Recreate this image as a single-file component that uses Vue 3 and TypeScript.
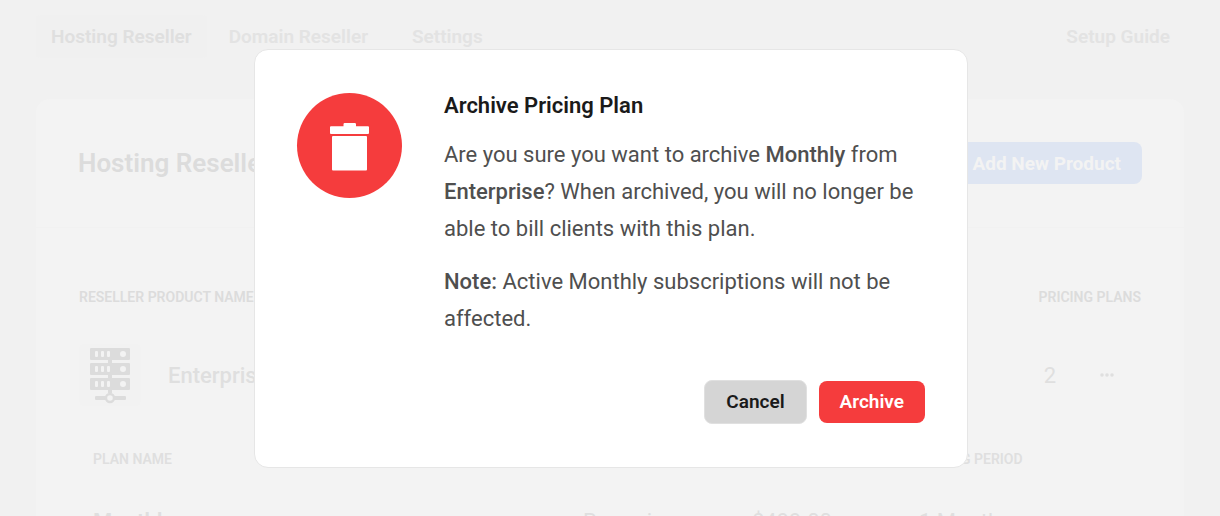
<script setup lang="ts">
import { ref } from 'vue'

interface Plan {
  name: string
  type: string
  price: string
  period: string
}

const tabs = ['Hosting Reseller', 'Domain Reseller', 'Settings']
const activeTab = ref(0)
const open = ref(true)
const plans = ref<Plan[]>([
  { name: 'Monthly', type: 'Recurring', price: '$499.00', period: '1 Month' },
])

function archive(): void {
  plans.value = []
  open.value = false
}
</script>

<template>
  <div class="page">
    <div class="content" :inert="open">
      <nav class="tabs" aria-label="Reseller">
        <button
          v-for="(tab, i) in tabs"
          :key="tab"
          type="button"
          class="tab"
          :class="{ active: i === activeTab }"
          @click="activeTab = i"
        >
          {{ tab }}
        </button>
        <a class="tab guide" href="#guide">Setup Guide</a>
      </nav>

      <main class="card">
        <header class="card-head">
          <h1>Hosting Reseller</h1>
          <button type="button" class="add">Add New Product</button>
        </header>

        <table class="products">
          <thead>
            <tr>
              <th scope="col">RESELLER PRODUCT NAME</th>
              <th scope="col" class="right">PRICING PLANS</th>
            </tr>
          </thead>
          <tbody>
            <tr>
              <td>
                <div class="product">
                  <span class="thumb">
                    <svg width="42" height="58" viewBox="0 0 42 58" aria-hidden="true">
                      <g fill="#dcdcdc">
                        <rect x="19" y="11" width="4" height="36" />
                        <rect x="1" y="2" width="40" height="12" rx="1" />
                        <rect x="1" y="17" width="40" height="12" rx="1" />
                        <rect x="1" y="32" width="40" height="12" rx="1" />
                        <rect x="6" y="50" width="31" height="4" rx="1" />
                      </g>
                      <g fill="#f3f3f3">
                        <template v-for="y in [5, 20, 35]" :key="y">
                          <rect x="6" :y="y" width="3" height="6" rx="1" />
                          <rect x="12" :y="y" width="3" height="6" rx="1" />
                          <rect x="18" :y="y" width="3" height="6" rx="1" />
                          <circle cx="34" :cy="y + 3" r="3" />
                        </template>
                      </g>
                      <circle cx="21" cy="52" r="4" fill="#f3f3f3" stroke="#dcdcdc" stroke-width="2.4" />
                    </svg>
                  </span>
                  <span class="product-name">Enterprise</span>
                </div>
              </td>
              <td>
                <div class="count">
                  <span>2</span>
                  <button type="button" class="more" aria-label="More actions">
                    <svg width="14" height="4" viewBox="0 0 14 4" fill="#dfdfdf" aria-hidden="true">
                      <circle cx="2" cy="2" r="1.8" />
                      <circle cx="7" cy="2" r="1.8" />
                      <circle cx="12" cy="2" r="1.8" />
                    </svg>
                  </button>
                </div>
              </td>
            </tr>
          </tbody>
        </table>

        <table class="plans">
          <colgroup>
            <col class="c-name" />
            <col class="c-type" />
            <col class="c-price" />
            <col />
          </colgroup>
          <thead>
            <tr>
              <th scope="col">PLAN NAME</th>
              <th scope="col">TYPE</th>
              <th scope="col">PRICE</th>
              <th scope="col">BILLING PERIOD</th>
            </tr>
          </thead>
          <tbody>
            <tr v-for="plan in plans" :key="plan.name">
              <td class="strong">{{ plan.name }}</td>
              <td>{{ plan.type }}</td>
              <td>{{ plan.price }}</td>
              <td>{{ plan.period }}</td>
            </tr>
          </tbody>
        </table>
      </main>
    </div>

    <div v-if="open" class="overlay">
      <section class="dialog" role="alertdialog" aria-modal="true" aria-labelledby="dlg-title" aria-describedby="dlg-text">
        <div class="dialog-body">
          <div class="badge">
            <svg width="39" height="48" viewBox="0 0 39 48" fill="#fff" aria-hidden="true">
              <path d="M13.5 3.2V1.2Q13.5 0 14.7 0H24.8Q26 0 26 1.2V3.2H38Q39 3.2 39 4.2V10Q39 11 38 11H1Q0 11 0 10V4.2Q0 3.2 1 3.2Z" />
              <rect x="2" y="13" width="35" height="34.5" rx="1" />
            </svg>
          </div>
          <div class="copy">
            <h2 id="dlg-title">Archive Pricing Plan</h2>
            <div id="dlg-text">
              <p>
                Are you sure you want to archive <strong>Monthly</strong> from
                <strong>Enterprise</strong>? When archived, you will no longer be able to bill clients with this plan.
              </p>
              <p><strong>Note:</strong> Active Monthly subscriptions will not be affected.</p>
            </div>
          </div>
        </div>
        <div class="actions">
          <button type="button" class="btn cancel" @click="open = false">Cancel</button>
          <button type="button" class="btn danger" @click="archive">Archive</button>
        </div>
      </section>
    </div>
  </div>
</template>

<style>
body {
  margin: 0;
  background: #f1f1f1;
}
</style>

<style scoped>
.page {
  position: relative;
  height: 100vh;
  overflow: hidden;
  background: #f1f1f1;
  color: #dfdfdf;
  font-family: Roboto, "Liberation Sans", sans-serif;
}
* {
  box-sizing: border-box;
}
button {
  border: 0;
  font-family: inherit;
  cursor: pointer;
}
h1,
h2,
p {
  margin: 0;
}
.content {
  padding: 15px 36px 0;
}
.tabs {
  display: flex;
}
.tab {
  height: 43px;
  padding: 0 22px;
  border-radius: 4px;
  background: transparent;
  color: #e3e3e3;
  font-size: 19px;
  font-weight: 600;
  line-height: 43px;
  text-decoration: none;
}
.tab.active {
  padding: 0 15px;
  background: #f0f0f0;
  color: #dfdfdf;
}
.tab.guide {
  margin-left: auto;
  padding: 0 14px;
}
.card {
  margin-top: 41px;
  border-radius: 14px;
  background: #f3f3f3;
}
.card-head {
  display: flex;
  align-items: center;
  justify-content: space-between;
  height: 129px;
  padding: 0 42px;
  border-bottom: 1px solid #f1f1f1;
}
h1 {
  color: #dcdcdc;
  font-size: 26px;
  font-weight: 600;
}
.add {
  height: 42px;
  padding: 0 21px;
  border-radius: 8px;
  background: #dee5f2;
  color: #f3f3f3;
  font-size: 19px;
  font-weight: 700;
}
table {
  border-collapse: collapse;
}
th,
td {
  padding: 0;
  text-align: left;
  font-size: 22px;
}
th {
  font-size: 14px;
  font-weight: 600;
}
.products {
  width: calc(100% - 86px);
  margin: 48px 43px 0;
}
.products th {
  height: 42px;
  color: #dcdcdc;
}
.products .right {
  text-align: right;
}
.products td {
  height: 114px;
}
.product {
  display: flex;
  align-items: center;
  gap: 27px;
}
.thumb {
  display: grid;
  place-items: center;
  width: 62px;
  height: 62px;
  border-radius: 6px;
  background: #f2f2f2;
}
.product-name {
  font-weight: 500;
}
.count {
  display: flex;
  align-items: center;
  justify-content: flex-end;
  gap: 26px;
  padding-right: 9px;
}
.more {
  display: grid;
  place-items: center;
  width: 50px;
  height: 32px;
  padding: 0;
  background: transparent;
}
.plans {
  width: calc(100% - 114px);
  margin: 6px 57px 0;
  table-layout: fixed;
}
.c-name {
  width: 490px;
}
.c-type {
  width: 169px;
}
.c-price {
  width: 167px;
}
.plans th {
  height: 42px;
}
.plans td {
  height: 82px;
}
.plans .strong {
  font-weight: 600;
}
.overlay {
  position: absolute;
  inset: 0;
  display: grid;
  place-items: center;
  padding-left: 2px;
}
.dialog {
  width: min(714px, 100%);
  padding: 43px 42px;
  border: 1px solid #e6e6e6;
  border-radius: 14px;
  background: #fff;
}
.dialog-body {
  display: flex;
  gap: 42px;
}
.badge {
  display: grid;
  flex: none;
  place-items: center;
  width: 105px;
  height: 105px;
  padding-top: 4px;
  border-radius: 50%;
  background: #f53c3d;
}
.copy {
  flex: 1;
  color: #4f4f4f;
  font-size: 22px;
  line-height: 37px;
}
h2 {
  margin-bottom: 17px;
  color: #1a1a1a;
  font-size: 22px;
  font-weight: 600;
  line-height: 26px;
}
p + p {
  margin-top: 16px;
}
strong {
  font-weight: 500;
}
.actions {
  display: flex;
  align-items: center;
  justify-content: flex-end;
  gap: 12px;
  margin-top: 43px;
}
.btn {
  height: 42px;
  padding: 0 21px;
  border-radius: 8px;
  font-size: 19px;
  font-weight: 600;
}
.cancel {
  height: 44px;
  border: 1px solid #e0e0e0;
  background: #d5d5d5;
  color: #1a1a1a;
}
.danger {
  background: #f53c3d;
  color: #fff;
}
</style>
